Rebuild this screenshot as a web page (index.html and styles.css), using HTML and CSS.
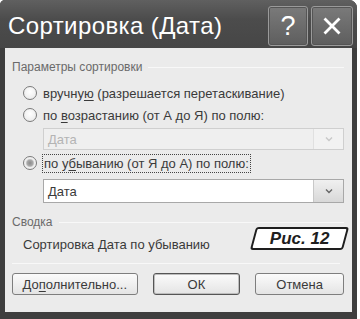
FILE: index.html
```html
<!DOCTYPE html>
<html lang="ru">
<head>
  <meta charset="UTF-8">
  <title>Сортировка</title>
  <link rel="stylesheet" href="styles.css">
</head>
<body>
  <div class="window">
    <div class="titlebar">
      <span class="title">Сортировка (Дата)</span>
      <div class="tbtns">
        <span class="tbtn">?</span>
        <span class="tbtn close">
          <svg width="18" height="18" viewBox="0 0 18 18"><path d="M2.5 2.5 L15.5 15.5 M15.5 2.5 L2.5 15.5" stroke="#fff" stroke-width="2.8" stroke-linecap="square"/></svg>
        </span>
      </div>
    </div>
    <div class="content">
      <div class="group">
        <span>Параметры сортировки</span>
        <i class="line"></i>
      </div>

      <div class="radio-row r1">
        <span class="radio"></span>
        <span>вручну<u>ю</u> (разрешается перетаскивание)</span>
      </div>
      <div class="radio-row">
        <span class="radio"></span>
        <span>по <u>в</u>озрастанию (от А до Я) по полю:</span>
      </div>
      <div class="select disabled">
        <span class="val">Дата</span>
        <span class="arrow"><svg width="8" height="6" viewBox="0 0 8 6"><path d="M1 1.5 L4 4.5 L7 1.5" fill="none" stroke="#c8c8c8" stroke-width="1.4"/></svg></span>
      </div>
      <div class="radio-row r3">
        <span class="radio checked"></span>
        <span class="focus">по у<u>б</u>ыванию (от Я до А) по полю:</span>
      </div>
      <div class="select">
        <span class="val">Дата</span>
        <span class="arrow"><svg width="8" height="6" viewBox="0 0 8 6"><path d="M1 1.5 L4 4.5 L7 1.5" fill="none" stroke="#666" stroke-width="1.4"/></svg></span>
      </div>

      <div class="group g2">
        <span>Сводка</span>
        <i class="line"></i>
      </div>
      <div class="summary">Сортировка Дата по убыванию</div>
      <div class="sep"></div>

      <div class="buttons">
        <span class="btn more">До<u>п</u>олнительно...</span>
        <span class="btn ok">ОК</span>
        <span class="btn cancel">Отмена</span>
      </div>

      <div class="fig"><span>Рис. 12</span></div>
    </div>
  </div>
</body>
</html>
```

FILE: styles.css
```css
*{
  margin: 0;
  padding: 0;
  box-sizing: border-box;
}
body{
  background: #fff;
  font-family: "Liberation Sans", Arial, sans-serif;
  width: 360px;
  height: 319px;
  overflow: hidden;
}

/* window */
.window{
  width: 357px;
  height: 319px;
  background: #3e3e3e;
  border-radius: 5px 8px 0 0;
  display: flex;
  flex-direction: column;
  padding: 0 5px 7px 5px;
}

.titlebar{
  height: 48px;
  display: flex;
  align-items: center;
  justify-content: space-between;
  background: linear-gradient(#606060, #4c4c4c 40%, #464646);
  margin: 0 -5px;
  padding: 0 5px 0 8px;
  border-radius: 5px 8px 0 0;
}
.title{
  color: #fff;
  font-size: 24px;
  letter-spacing: 0.4px;
  padding-top: 4px;
}
.tbtns{
  display: flex;
  gap: 3px;
  padding-top: 4px;
  margin-right: -1px;
}
.tbtn{
  width: 40px;
  height: 40px;
  border: 1px solid #9a9a9a;
  border-radius: 3px;
  background: linear-gradient(#7a7a7a, #5e5e5e);
  color: #fff;
  font-size: 27px;
  display: flex;
  align-items: center;
  justify-content: center;
  box-shadow: inset 0 0 0 1px #555;
}
.tbtn.close{
  width: 42px;
}

/* content */
.content{
  flex: 1;
  background: #ebebeb;
  position: relative;
  padding: 11px 8px 0 7px;
  font-size: 13px;
  color: #3a3a3a;
}

.group{
  display: flex;
  align-items: center;
  gap: 6px;
  height: 16px;
  color: #6a6a6a;
  font-size: 12px;
}
.group .line{
  flex: 1;
  height: 1px;
  background: #d4d4d4;
  border-bottom: 1px solid #f8f8f8;
}

.radio-row{
  display: flex;
  align-items: center;
  gap: 6px;
  height: 22px;
  padding-left: 11px;
}
.radio-row.r1{
  margin-top: 7px;
}
.radio-row.r3{
  margin-top: 2px;
}
.radio{
  width: 14px;
  height: 14px;
  border-radius: 50%;
  border: 1px solid #7a7a7a;
  background: radial-gradient(circle at 50% 40%, #fff, #e6e6e6);
  flex: none;
}
.radio.checked{
  background: radial-gradient(circle, #8a8a8a 0, #aaa 3px, #eee 4.5px, #fafafa);
}
.focus{
  outline: 1px dotted #444;
  outline-offset: 0;
  padding: 1px 1px;
}
u{
  text-decoration: underline;
  text-underline-offset: 2px;
}

.select{
  margin-left: 31px;
  height: 22px;
  display: flex;
  align-items: center;
  justify-content: space-between;
  background: #fff;
  border: 1px solid #a8a8a8;
}
.select.disabled{
  background: #efefef;
  border-color: #cfcfcf;
  color: #b4b4b4;
  margin-top: 2px;
}
.select .val{
  padding-left: 4px;
}
.select .arrow{
  width: 30px;
  height: 100%;
  display: flex;
  align-items: center;
  justify-content: center;
  background: linear-gradient(#f0f0f0, #d8d8d8);
  border-left: 1px solid #c8c8c8;
}
.select.disabled .arrow{
  background: #f2f2f2;
  border-left-color: #e0e0e0;
}
.select:not(.disabled){
  margin-top: 5px;
  height: 24px;
}

.g2{
  margin-top: 11px;
}
.summary{
  margin-top: 7px;
  padding-left: 11px;
  height: 16px;
}
.sep{
  margin: 10px 4px 0 0;
  height: 1px;
  background: #d6d6d6;
  border-bottom: 1px solid #f8f8f8;
}

.buttons{
  display: flex;
  gap: 15px;
  margin-top: 9px;
  padding-left: 0;
}
.btn{
  height: 22px;
  border: 1px solid #7e7e7e;
  border-radius: 3px;
  background: linear-gradient(#fbfbfb, #e4e4e4);
  display: flex;
  align-items: center;
  justify-content: center;
}
.btn.more{
  width: 126px;
}
.btn.ok{
  width: 88px;
  border-color: #555;
  box-shadow: inset 0 0 0 1px #bdbdbd;
}
.btn.cancel{
  width: 89px;
}

/* figure label */
.fig{
  position: absolute;
  left: 248px;
  top: 179px;
  width: 93px;
  height: 23px;
  border: 2px solid #1e1e1e;
  border-radius: 3px;
  background: #fff;
  transform: skewX(-15deg);
  display: flex;
  align-items: center;
  justify-content: center;
}
.fig span{
  transform: skewX(15deg);
  font-size: 17px;
  font-weight: bold;
  font-style: italic;
  color: #1e1e1e;
}
```
